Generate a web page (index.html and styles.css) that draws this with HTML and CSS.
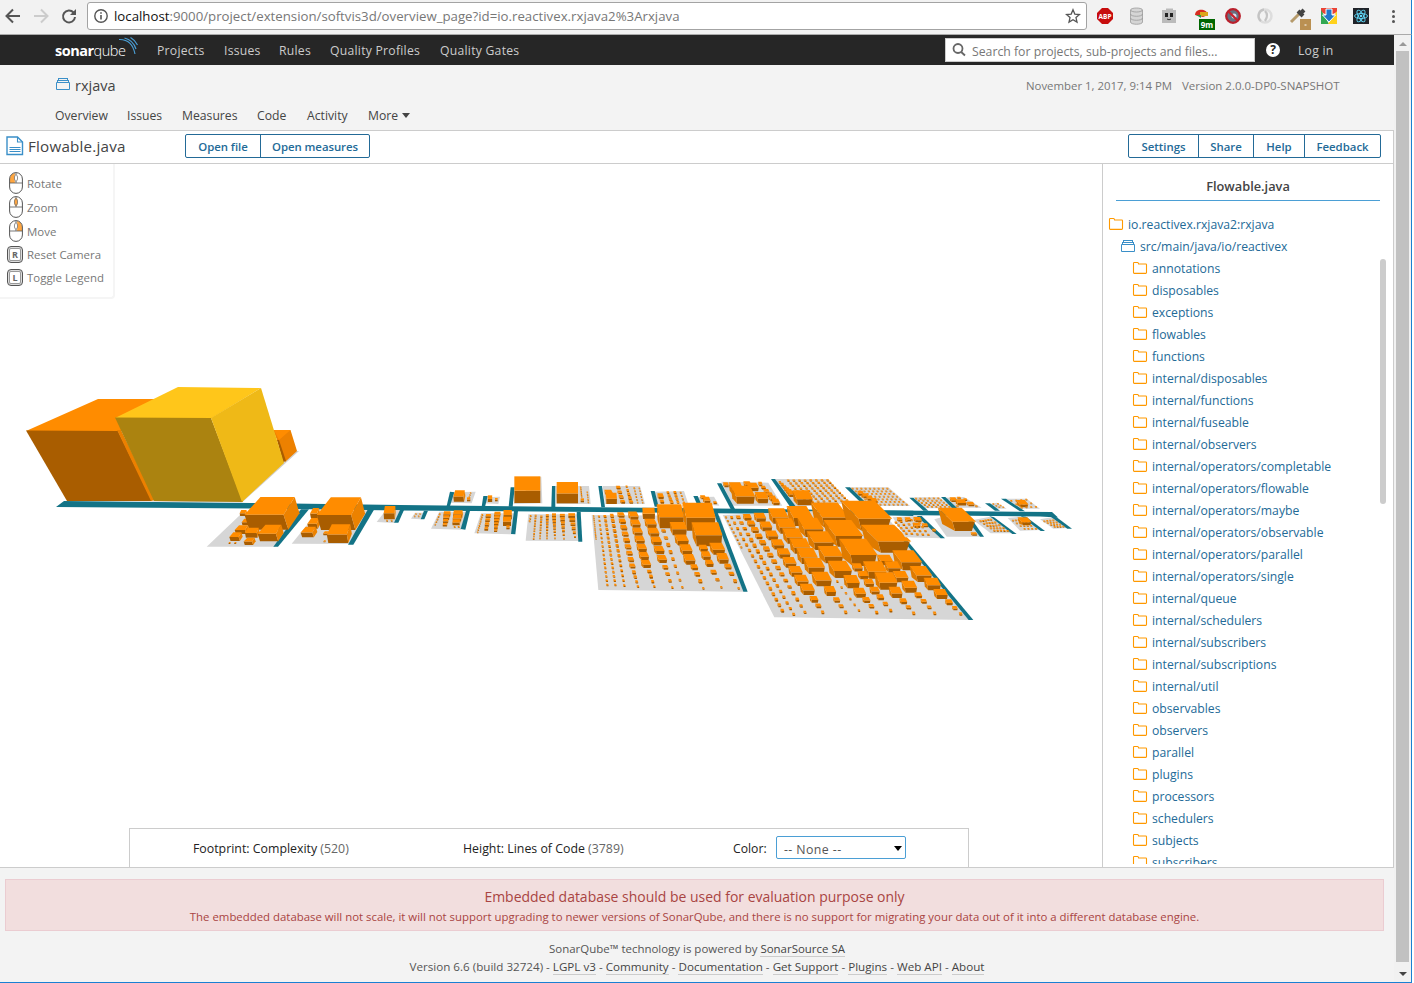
FILE: index.html
```html
<!DOCTYPE html>
<html lang="en">
<head>
<meta charset="utf-8">
<title>rxjava - SoftVis3D</title>
<link rel="stylesheet" href="styles.css">
</head>
<body>
<svg class="defs" width="0" height="0">
  <symbol id="folder" viewBox="0 0 16 14"><path d="M1.500 11.500V2.200q0-.7.7-.7h3.300q.6 0 .8.6l.3.9h7.200q.7 0 .7.7v7.800q0 .9-.8.900H2.200q-.7 0-.7-.9z" fill="none" stroke="#f90" stroke-width="1.100"/></symbol>
  <symbol id="stack" viewBox="0 0 16 14"><path d="M1.500 5.500h13v7h-13zM2.500 3.500h11M3.500 1.500h9M2.500 3v2M13.500 3v2M3.500 1v2M12.500 1v2" fill="none" stroke="currentColor"/></symbol>
  <symbol id="mouse" viewBox="0 0 14 22"><rect x=".6" y=".6" width="12.800" height="20.800" rx="6.400" fill="none" stroke="#555"/><path d="M.6 11h12.800M7 1v2M7 9v2" stroke="#555" stroke-width=".8"/><ellipse cx="7" cy="6" rx="1.600" ry="3.200" fill="none" stroke="#777" stroke-width=".8"/></symbol>
</svg>
<header class="browser">
  <svg class="nav-icons" width="88" height="34" viewBox="0 0 88 34" fill="none" stroke="#555" stroke-width="2">
    <path d="M20 16H7M13 9.500L6.500 16l6.500 6.500"/><path d="M34 16h13M41 9.500l6.500 6.500-6.500 6.500" stroke="#ccc"/>
    <path d="M73.500 12.500A6 6 0 1 0 75 17"/><path d="M76 9v6h-6z" fill="#555" stroke="none"/>
  </svg>
  <div class="address">
    <svg width="16" height="16" viewBox="0 0 16 16"><circle cx="8" cy="8" r="6.200" fill="none" stroke="#555" stroke-width="1.400"/><path d="M8 7v4.500M8 4.200v1.600" stroke="#555" stroke-width="1.600"/></svg>
    <span class="url"><b>localhost</b>:9000/project/extension/softvis3d/overview_page?id=io.reactivex.rxjava2%3Arxjava</span>
    <svg class="star" width="16" height="16" viewBox="0 0 16 16"><path d="M8 1.800l1.800 4.300 4.700.4-3.500 3.100 1 4.500L8 11.700l-4 2.400 1-4.500L1.500 6.500l4.700-.4z" fill="none" stroke="#555" stroke-width="1.300"/></svg>
  </div>
  <svg class="extensions" width="323" height="34" viewBox="1088 0 323 34">
    <path d="M1102 8h6l5 5v6l-5 5h-6l-5-5v-6z" fill="#c70d0d"/><text x="1105" y="19" class="abp" text-anchor="middle">ABP</text>
    <g fill="#d5d5d5" stroke="#999" stroke-width=".8"><path d="M1130.500 10v12c0 3 12 3 12 0V10"/><ellipse cx="1136.500" cy="10" rx="6" ry="2"/><path d="M1130.500 14c0 3 12 3 12 0M1130.500 18c0 3 12 3 12 0" fill="none"/></g>
    <path d="M1162 10h4V8.500h7V10h3v13h-14z" fill="#bbb"/><path d="M1166.500 13v4M1171.500 13v4" stroke="#222" stroke-width="3"/><path d="M1167 19q2 1.500 4 0" stroke="#333" fill="none"/>
    <path d="M1195 15c0-7 12-7 13 0l-5 2z" fill="#d82d20"/><path d="M1200 12h8v4h-8z" fill="#dba61b"/><path d="M1196 15h5v3z" fill="#279b49"/><rect x="1199" y="19" width="16" height="11" fill="#060"/><text x="1207" y="28" class="badge" text-anchor="middle">9m</text>
    <circle cx="1233" cy="16" r="6.800" fill="#667080" stroke="#b9202c" stroke-width="2.300"/><circle cx="1234" cy="16" r="2.500" fill="#dde"/><path d="M1228.500 11.500l9 9" stroke="#c9202c" stroke-width="2.300"/>
    <g fill="none"><circle cx="1265" cy="16" r="6.500" stroke="#ddd" stroke-width="2.500"/><path d="M1264 9.500a6.500 6.500 0 0 0-3 11.500M1265 11q4 4 0 10" stroke="#c4c4c4" stroke-width="2.300"/></g>
    <path d="M1291 22l8-8" stroke="#b69b6c" stroke-width="3"/><path d="M1298 11l5 5M1301 13l3-3" stroke="#444" stroke-width="4"/><rect x="1300" y="19" width="11" height="11" fill="#ba9052"/><path d="M1304.500 25h2" stroke="#fff"/>
    <path d="M1321 8h16v4l-8 4-8-4z" fill="#ea4335"/><path d="M1321 10l8 14h-8z" fill="#31a853"/><path d="M1337 11v13h-9z" fill="#ffd21c"/><path d="M1326 9h6v6h3.500l-6.500 7-6.500-7h3.500z" fill="#2377c8" stroke="#fff"/>
    <rect x="1353" y="8" width="16" height="16" fill="#202329"/><g fill="none" stroke="#61dafb" stroke-width=".9"><ellipse cx="1361" cy="16" rx="6.500" ry="2.500"/><ellipse cx="1361" cy="16" rx="6.500" ry="2.500" transform="rotate(60 1361 16)"/><ellipse cx="1361" cy="16" rx="6.500" ry="2.500" transform="rotate(120 1361 16)"/></g><circle cx="1361" cy="16" r="1.300" fill="#61dafb"/>
    <g fill="#555"><circle cx="1393.500" cy="11.500" r="1.500"/><circle cx="1393.500" cy="16.500" r="1.500"/><circle cx="1393.500" cy="21.500" r="1.500"/></g>
  </svg>
</header>
<div class="window">
<main class="page">
  <nav class="global-nav">
    <div class="logo"><b>sonar</b><span>qube</span><svg width="20" height="20" viewBox="0 0 20 20" fill="none" stroke="#4b9fd5" stroke-width="1.200"><path d="M1 3.500Q14 3 17 18M6.500 2Q15 4 18 13M12.500 1.500Q17 4 19.500 9"/></svg></div>
    <a>Projects</a><a>Issues</a><a>Rules</a><a>Quality Profiles</a><a>Quality Gates</a>
    <div class="search"><svg width="16" height="16" viewBox="0 0 16 16" fill="none" stroke="#666" stroke-width="1.800"><circle cx="6" cy="6.500" r="4.500"/><path d="M9.200 10l3.800 3.500"/></svg><span>Search for projects, sub-projects and files...</span></div>
    <i class="help">?</i>
    <a>Log in</a>
  </nav>
  <section class="project">
    <div class="project-top"><svg class="blue" width="16" height="14"><use href="#stack"/></svg><span class="project-name">rxjava</span><span class="date">November 1, 2017, 9:14 PM</span><span class="version">Version 2.0.0-DP0-SNAPSHOT</span></div>
    <div class="tabs"><a>Overview</a><a>Issues</a><a>Measures</a><a>Code</a><a>Activity</a><a class="more">More</a></div>
  </section>
  <section class="app">
    <div class="titlebar">
      <svg width="18" height="20" viewBox="0 0 18 20" fill="none" stroke="#3a8fc8" stroke-width="1.400"><path d="M1 1h10.500l5 5v12.500H1z"/><path d="M11.500 1v5h5M3.500 11.500h11M3.500 13.500h11M3.500 15.500h11" stroke-width="1.100"/></svg>
      <span class="file-title">Flowable.java</span>
      <div class="buttons open"><span>Open file</span><span>Open measures</span></div>
      <div class="buttons actions"><span>Settings</span><span>Share</span><span>Help</span><span>Feedback</span></div>
    </div>
    <div class="workspace">
      <div class="viewer">
        <svg id="scene" class="scene" width="1102" height="703" viewBox="0 164 1102 703"></svg>
        <div class="controls">
          <p><svg width="14" height="22"><path d="M1 11V7q0-5 5-6l-.5 5 .5 5z" fill="#ffa640"/><use href="#mouse"/></svg>Rotate</p>
          <p><svg width="14" height="22"><ellipse cx="7" cy="6" rx="1.800" ry="4" fill="#ffa640"/><use href="#mouse"/></svg>Zoom</p>
          <p><svg width="14" height="22"><path d="M13 11V7q0-5-5-6l.5 5-.5 5z" fill="#ffa640"/><use href="#mouse"/></svg>Move</p>
          <p class="key-row"><kbd>R</kbd>Reset Camera</p>
          <p class="key-row"><kbd>L</kbd>Toggle Legend</p>
        </div>
        <div class="metrics">
          <span class="footprint">Footprint: Complexity <em>(520)</em></span>
          <span class="height">Height: Lines of Code <em>(3789)</em></span>
          <span class="color">Color:</span>
          <div class="select">-- None --</div>
        </div>
      </div>
      <aside class="sidebar">
        <h3>Flowable.java</h3>
        <div class="root"><svg width="16" height="14"><use href="#folder"/></svg>io.reactivex.rxjava2:rxjava</div>
        <div class="root sub"><svg width="16" height="14"><use href="#stack"/></svg>src/main/java/io/reactivex</div>
        <ul id="tree" class="tree"></ul>
      </aside>
    </div>
  </section>
  <footer class="footer">
    <div class="alert"><strong>Embedded database should be used for evaluation purpose only</strong><span>The embedded database will not scale, it will not support upgrading to newer versions of SonarQube, and there is no support for migrating your data out of it into a different database engine.</span></div>
    <p class="powered">SonarQube™ technology is powered by <a>SonarSource SA</a></p>
    <p class="links">Version 6.6 (build 32724) - <a>LGPL v3</a> - <a>Community</a> - <a>Documentation</a> - <a>Get Support</a> - <a>Plugins</a> - <a>Web API</a> - <a>About</a></p>
  </footer>
</main>
<div class="scrollbar"><i class="arrow-up"></i><div class="thumb"></div><i class="arrow-down"></i></div>
</div>
<script src="scene.js"></script>
</body>
</html>
```
FILE: styles.css
```css
* { box-sizing: border-box; }
body { margin: 0; width: 1414px; height: 983px; overflow: hidden; background: #fff; font-family: "Open Sans", "Noto Sans", sans-serif; font-size: 12.2px; color: #444; }
p, h3, ul { margin: 0; padding: 0; }
.defs { position: absolute; }
svg { display: block; flex: none; }
.browser { display: flex; width: 1412px; height: 35px; background: #f2f2f2; border-bottom: 1px solid #aaa; border-right: 1px solid #1a80d2; }
.nav-icons { margin-right: -1px; }
.address { width: 1000px; height: 28px; margin-top: 2px; border: 1px solid #a3a3a3; border-radius: 3px; background: #fff; display: flex; align-items: center; padding: 0 5px; flex: none; }
.url { margin-left: 5px; font-size: 13.240px; color: #777; white-space: nowrap; }
.url b { font-weight: 400; color: #111; }
.star { margin-left: auto; }
.extensions { margin-left: 1px; }
.abp { font: bold 6.500px "Open Sans"; fill: #fff; }
.badge { font: bold 8px "Open Sans"; fill: #fff; }
.window { display: flex; width: 1412px; height: 948px; border-right: 1px solid #1a80d2; border-bottom: 1px solid #1a80d2; }
.page { width: 1394px; background: #f3f3f3; flex: none; }
.global-nav { display: grid; grid-template-columns: 102px 67px 55px 51px 110px 505px 310px 43px 80px; height: 30px; padding-left: 55px; align-items: center; background: #262626; color: #ccc; letter-spacing: .25px; white-space: nowrap; }
.logo { display: flex; align-items: center; height: 30px; color: #fff; font-size: 14.500px; letter-spacing: -.5px; }
.logo span { font-weight: 300; }
.logo svg { margin: -8px 0 0 -7px; }
.search { display: flex; align-items: center; height: 24px; background: #fff; border: 1px solid #ccc; color: #777; padding-left: 6px; letter-spacing: 0; font-size: 12.250px; }
.search span { margin-left: 4px; padding-top: 2px; }
.help { margin-left: 11px; width: 14px; height: 14px; border-radius: 50%; background: #fff; color: #262626; font: bold 12px/14px "Open Sans", sans-serif; text-align: center; letter-spacing: 0; }
.project { height: 65px; padding-left: 55px; }
.project-top { display: flex; align-items: center; height: 41px; color: #777; }
.blue { color: #3a8fc8; margin-top: -3px; }
.project-name { font-size: 14.500px; color: #444; width: 951px; margin-left: 4px; }
.date { width: 156px; font-size: 11.400px; white-space: nowrap; }
.version { font-size: 11.500px; white-space: nowrap; }
.tabs { display: grid; grid-template-columns: 72px 55px 75px 50px 61px 60px; height: 19px; align-items: center; white-space: nowrap; }
.more::after { content: ""; display: inline-block; border: 4px solid transparent; border-top: 5px solid #444; border-bottom: 0; margin: 0 0 2px 4px; }
.app { height: 738px; border: 1px solid #ccc; border-left: 0; background: #fff; }
.titlebar { height: 33px; display: flex; align-items: center; padding: 0 12px 2px 6px; border-bottom: 1px solid #ccc; }
.file-title { width: 157px; margin-left: 4px; font-size: 15.200px; font-weight: 500; letter-spacing: .2px; }
.buttons { display: flex; height: 24px; border: 1px solid #236a97; border-radius: 2px; color: #236a97; font-size: 11.400px; font-weight: 600; }
.buttons span { display: flex; justify-content: center; align-items: center; white-space: nowrap; }
.buttons span + span { border-left: 1px solid #236a97; }
.open { width: 185px; letter-spacing: -.05px; }
.open span:first-child { width: 74px; }
.open span:last-child { flex: 1; }
.actions { display: grid; grid-template-columns: 69px 55px 51px 76px; margin-left: auto; }
.workspace { display: flex; height: 703px; }
.viewer { width: 1102px; position: relative; flex: none; }
.controls { position: absolute; left: 0; top: 0; width: 115px; height: 135px; padding: 7px 0 0 8px; border: solid #f5f5f5; border-width: 0 2px 2px 0; border-radius: 0 0 4px 0; color: #777; }
.controls p { display: flex; align-items: center; height: 24px; gap: 4px; margin-left: 1px; font-size: 11.450px; white-space: nowrap; }
.controls p.key-row { height: 23px; gap: 4px; margin-left: -1px; }
kbd { width: 16px; height: 17px; border: 1px solid #555; border-radius: 4px; box-shadow: inset 0 0 0 1px #ddd, inset 0 0 0 2px #999; font: bold 9px/15px "Open Sans", sans-serif; text-align: center; color: #666; }
.metrics { position: absolute; left: 129px; bottom: 0; width: 840px; height: 39px; border: 1px solid #ccc; border-bottom: 0; display: flex; align-items: center; padding-left: 63px; color: #222; background: #fff; white-space: nowrap; font-size: 12.350px; }
.metrics em { font-style: normal; color: #666; }
.footprint { width: 270px; }
.height { width: 270px; }
.color { width: 43px; font-size: 12.200px; padding-top: 1px; }
.select { position: relative; width: 130px; height: 23px; margin-top: -2px; border: 1px solid #4b9fd5; border-radius: 2px; line-height: 25px; padding-left: 7px; color: #555; letter-spacing: .4px; }
.select::after { content: ""; position: absolute; right: 3px; top: 9px; border: 4px solid transparent; border-top: 5px solid #000; border-bottom: 0; }
.sidebar { position: relative; width: 291px; flex: none; border-left: 1px solid #ccc; padding: 0 13px 0 5px; color: #236a97; overflow: hidden; }
.sidebar h3 { margin: 0 0 12px 8px; height: 37px; padding-top: 8px; border-bottom: 1px solid #4b9fd5; text-align: center; font-size: 12.800px; line-height: 28px; font-weight: 600; color: #444; }
.root, .tree li { display: flex; align-items: center; height: 22px; gap: 4px; white-space: nowrap; }
.root.sub { padding-left: 12px; }
.root.sub svg { color: #3a8fc8; }
.tree { height: 607px; padding-left: 24px; overflow: hidden; list-style: none; }
.sidebar::after { content: ""; position: absolute; right: 7px; top: 95px; width: 6px; height: 245px; background: #ccc; border-radius: 3px; }
.footer { height: 114px; text-align: center; font-size: 11.640px; color: #555; white-space: nowrap; }
.alert { margin: 11px 10px 0 5px; height: 52px; border: 1px solid #ebccd1; background: #f2dede; color: #a94442; padding-top: 7px; }
.alert strong { display: block; font-size: 13.980px; line-height: 20px; font-weight: 400; }
.alert span { display: block; line-height: 20px; font-size: 11.400px; }
.powered { line-height: 18px; margin-top: 9px; font-size: 11.460px; }
.links { line-height: 18px; }
.footer a { color: #444; border-bottom: 1px solid #ccc; }
.scrollbar { width: 17px; background: #f1f1f1; display: flex; flex-direction: column; align-items: center; padding: 7px 0 6px; }
.thumb { flex: 1; width: 13px; margin: 5px 0 10px; background: #c1c1c1; }
.arrow-up { border: 4px solid transparent; border-bottom-color: #999; border-top: 0; }
.arrow-down { border: 4px solid transparent; border-top-color: #444; border-bottom: 0; }
```
FILE: scene.js
```js
var folders = ['annotations','disposables','exceptions','flowables','functions','internal/disposables','internal/functions','internal/fuseable','internal/observers','internal/operators/completable','internal/operators/flowable','internal/operators/maybe','internal/operators/observable','internal/operators/parallel','internal/operators/single','internal/queue','internal/schedulers','internal/subscribers','internal/subscriptions','internal/util','observables','observers','parallel','plugins','processors','schedulers','subjects','subscribers'];
document.getElementById('tree').innerHTML = folders.map(function (f) {
  return '<li><svg width="16" height="14"><use href="#folder"/></svg>' + f + '</li>';
}).join('');

var TEAL = '#137386', GROUND = '#d6d6d6', TOP = '#ff8c00', SIDE = '#df7b00', FRONT = '#a95d00';
var out = [];
function poly(points, color) { return '<polygon points="' + points + '" fill="' + color + '"/>'; }

/* Each district works in local units, three to a pixel, from its own origin. */
function district(ox, oy, build) {
  var ground = [], roads = [], boxes = [];
  var d = {
    plot: function (p) { ground.push(poly(p, GROUND)); },
    road: function (p) { roads.push(poly(p, TEAL)); },
    /* Box with centre x, y, overall width and height, and the shift of its top's back edge. */
    box: function (x, y, w, h, k) {
      if (h === undefined) h = w < 14 ? w : w * .74;
      if (k === undefined) k = -.22;
      var s = Math.abs(k) * w, fw = w - s, l = x - w / 2, t = y - h / 2, m = t + h * (k < -.2 ? .6 : .54), b = t + h, c = s * .3;
      var html;
      if (k < 0) {
        html = poly([l + s, m, l + w - c * .3, m, l + w - c, b, l + s + c * .6, b], FRONT) + poly([l, t, l + s, m, l + s + c * .6, b, l + s * .3, m + h * .1], SIDE) +
               poly([l, t, l + fw, t, l + w, m, l + s, m], TOP);
      } else {
        html = poly([l, m, l + fw, m, l + fw + c, b, l + c, b], FRONT) + poly([l + fw, m, l + w - c, t, l + w, t + h * .5, l + fw + c, b], '#ec8200') +
               poly([l, m, l + s, t, l + w - c, t, l + fw, m], TOP);
      }
      boxes.push({ y: b, html: html });
    },
    row: function (x0, y0, x1, y1, n, a, z, k) {
      for (var i = 0; i < n; i++) { var t = n > 1 ? i / (n - 1) : 0; d.box(x0 + (x1 - x0) * t, y0 + (y1 - y0) * t, a + (z - a) * t, undefined, k); }
    },
    /* Rows of small boxes spread over the quad top-left, top-right, bottom-right, bottom-left. */
    grid: function (q, cols, rows, size) {
      for (var r = 0; r < rows; r++) for (var c = 0; c < cols; c++) {
        var u = cols > 1 ? c / (cols - 1) : 0, v = rows > 1 ? r / (rows - 1) : 0;
        d.box((q[0] * (1 - u) + q[2] * u) * (1 - v) + (q[6] * (1 - u) + q[4] * u) * v,
              (q[1] * (1 - u) + q[3] * u) * (1 - v) + (q[7] * (1 - u) + q[5] * u) * v, size, size * .75);
      }
    }
  };
  build(d);
  boxes.sort(function (a, b) { return a.y - b.y; });
  out.push('<g transform="translate(' + ox + ' ' + oy + ') scale(.33333)">' + ground.join('') + roads.join('') + boxes.map(function (b) { return b.html; }).join('') + '</g>');
}

out.push(poly('56,507 64,501 250,503 400,505 620,507.500 800,509.500 1052,512 1058,517.500 1040,516.500 800,514 600,512 400,510.500 250,508.500', TEAL));
out.push(poly('66,500.500 242,502.500 299,451 290,451 240,500', '#d0d0d0'));
out.push(poly('98,399 165,399 130,431 26,431', TOP) + poly('26,430.500 118,431 152,501 67,501', FRONT) + poly('117,430 121,430 155,500 151,501', '#ec8000'));
out.push(poly('273,430 290.500,430 297,451 285,462 277,440', '#ed8100') + poly('274,430 290.500,430 279,440', TOP) + poly('277,440 279,440 286,461 283,462', FRONT));
out.push(poly('178,387 261,388 211,418.500 115,418', '#ffc61a') + poly('115,417.500 211,418 243,502 154,501', '#ab8310') + poly('211,418 261,388 284,463 242,502', '#efb917'));

district(0, 370, function (d) {
  d.plot('620,530 720,435 905,418 825,530'); d.road('903,418 927,418 834,530 820,530');
  d.plot('875,521 950,430 1105,420 1050,522'); d.road('1103,419 1122,419 1060,524 1044,524');
  d.box(730, 429, 22, 18, .2); d.box(816, 430, 165, 98, .29);
  d.box(738, 456, 26, 20, .3); d.box(726, 479, 44, 26, .3); d.box(708, 500, 40, 26, .3);
  d.box(757, 488, 44, 30, .2); d.box(812, 489, 78, 50, .3); d.box(749, 514, 36, 22, .3);
  d.box(689, 519, 7, 6, .3); d.box(706, 519, 7, 6, .3);
  d.box(945, 429, 30, 30, .3); d.box(1023, 431, 145, 98, .29); d.box(942, 460, 40, 32, .3);
  d.box(927, 486, 50, 32, .3); d.box(978, 490, 18, 12, .3); d.box(1018, 491, 75, 56, .2); d.box(974, 514, 8, 6, .3);
});

district(380, 460, function (d) {
  d.plot('-10,186 18,150 62,150 42,189'); d.road('60,150 72,150 55,188 42,188'); d.box(29, 158, 36, 40, .1); d.row(21, 182, 35, 182, 2, 6, 6);
  d.plot('93,176 105,158 130,158 122,178'); d.road('132,152 144,152 133,178 122,178'); d.row(104, 169, 116, 169, 2, 5, 5); d.row(108, 162, 120, 162, 2, 5, 5);
  d.plot('153,206 178,155 258,155 243,209'); d.road('258,152 270,152 256,209 242,207');
  d.row(179, 163, 166, 194, 5, 6, 5, .2); d.row(201, 162, 195, 194, 4, 22, 14, .1); d.row(234, 162, 229, 187, 3, 30, 24, .1); d.row(224, 201, 236, 201, 2, 6, 6);
  d.plot('283,220 303,160 405,160 395,223'); d.road('402,153 414,153 406,223 393,222');
  d.row(307, 165, 293, 217, 9, 6, 5); d.row(325, 168, 319, 206, 4, 17, 12, .1); d.row(352, 163, 347, 211, 6, 20, 10, .1); d.box(383, 164, 25, 28, 0); d.box(381, 184, 24, 28, 0); d.box(384, 202, 10, 12, 0);
  d.plot('437,242 445,163 592,163 597,243'); d.road('590,155 602,155 607,245 595,245');
  d.row(452, 168, 449, 184, 3, 6, 6); d.row(467, 167, 461, 237, 10, 6, 5, 0); d.row(484, 170, 480, 235, 9, 7, 5, 0); d.row(502, 167, 501, 235, 9, 9, 5, 0); d.row(522, 166, 525, 235, 8, 12, 5, 0); d.row(547, 167, 552, 236, 7, 15, 5, 0); d.row(575, 167, 585, 231, 6, 20, 6, 0);
  d.plot('213,97 287,95 275,130 208,128'); d.road('210,95 223,97 210,138 200,138'); d.box(238, 108, 36, 34, .15); d.box(266, 118, 10, 12, 0); d.row(272, 99, 268, 111, 3, 5, 5);
  d.plot('313,112 360,110 355,132 312,130'); d.road('310,108 323,108 315,140 305,140'); d.box(330, 116, 13, 20, 0); d.box(349, 119, 8, 10, 0);
  d.plot('475,50 484,50 487,130 400,132'); d.road('392,82 404,82 398,140 386,140'); d.box(442, 89, 78, 80, 0);
  d.plot('526,78 627,78 632,132 530,132'); d.road('516,78 526,78 526,142 514,142'); d.box(562, 98, 64, 64, 0); d.row(602, 82, 605, 110, 6, 5, 5); d.box(607, 121, 10, 12, 0); d.row(622, 97, 625, 127, 5, 5, 5);
});

district(580, 460, function (d) {
  d.plot('68,78 180,78 195,132 75,132'); d.road('55,78 66,78 75,142 64,142');
  d.box(86, 98, 26, 18); d.box(94, 115, 34, 34, -.05); d.row(115, 83, 128, 125, 4, 15, 16); d.row(140, 80, 153, 126, 5, 7, 14); d.row(163, 85, 173, 128, 6, 6, 5); d.row(178, 85, 188, 128, 6, 5, 5);
  d.plot('224,95 312,93 325,132 232,132'); d.road('212,93 224,93 236,140 224,140');
  d.box(242, 109, 20, 18); d.box(246, 125, 14, 12); d.row(264, 98, 275, 127, 4, 9, 12); d.row(285, 98, 294, 127, 4, 10, 9); d.row(302, 98, 312, 128, 4, 6, 7);
  d.plot('353,112 402,110 418,137 362,132'); d.road('340,108 353,108 365,135 352,135'); d.box(369, 112, 18, 12); d.box(380, 120, 24, 19); d.box(405, 128, 12, 9);
  d.plot('424,65 565,68 607,137 458,137'); d.road('411,70 424,70 465,147 452,147');
  d.box(438, 74, 18, 15); d.box(468, 85, 44, 36); d.box(489, 104, 74, 54); d.box(502, 72, 24, 17); d.box(518, 81, 38, 25); d.box(545, 113, 42, 34); d.row(541, 72, 587, 126, 6, 13, 26);
  d.plot('579,57 745,57 807,130 640,140'); d.road('573,57 585,57 648,140 630,140');
  d.grid([625, 62, 743, 61, 801, 121, 680, 126], 8, 9, 9); d.row(600, 67, 634, 102, 6, 8, 24); d.box(668, 113, 62, 45);
  d.plot('810,82 925,82 990,138 865,138'); d.road('795,82 810,82 855,125 840,125');
  d.grid([818, 86, 922, 86, 980, 134, 875, 134], 9, 7, 7); d.row(842, 100, 882, 122, 4, 20, 22);
  d.road('715,150 1000,152 1000,168 715,162');

  d.plot('35,165 420,168 490,395 55,390'); d.road('400,155 412,155 503,395 490,395');
  d.row(41, 168, 48, 237, 12, 5, 5); d.row(57, 170, 82, 375, 17, 7, 8); d.row(75, 170, 106, 375, 17, 10, 8); d.row(96, 168, 133, 377, 15, 13, 8);
  d.row(123, 165, 157, 318, 9, 23, 20); d.row(162, 337, 174, 380, 4, 13, 8);
  d.row(160, 167, 198, 312, 7, 33, 32); d.row(208, 335, 223, 380, 4, 15, 8);
  d.box(206, 160, 38, 34, -.05); d.row(212, 190, 246, 297, 5, 38, 32); d.row(256, 322, 277, 383, 4, 19, 8); d.row(251, 213, 307, 382, 9, 15, 8);
  d.box(271, 169, 82, 72, -.1); d.box(357, 170, 100, 84, -.12); d.box(295, 206, 52, 40, -.15); d.box(305, 240, 44, 33); d.box(318, 269, 40, 32); d.box(328, 298, 38, 32); d.row(343, 322, 370, 385, 4, 24, 8);
  d.box(381, 223, 93, 72, -.14); d.box(370, 265, 29, 22); d.box(378, 287, 31, 26); d.box(388, 310, 27, 22); d.row(401, 337, 424, 382, 3, 20, 8);
  d.box(412, 266, 48, 36); d.box(428, 295, 38, 32); d.row(444, 320, 476, 385, 4, 23, 8);

  d.plot('428,165 900,145 1172,480 583,472'); d.road('960,230 972,230 1180,480 1166,480');
  d.row(438, 172, 484, 262, 9, 7, 7); d.row(455, 173, 607, 452, 18, 10, 12); d.row(475, 172, 641, 463, 18, 15, 10); d.row(502, 172, 675, 457, 16, 27, 10);
  d.row(540, 172, 682, 388, 9, 38, 46); d.row(702, 418, 728, 457, 3, 27, 11);
  d.row(595, 168, 703, 318, 6, 62, 65); d.box(725, 357, 62, 44); d.box(750, 393, 38, 30); d.row(770, 420, 797, 457, 3, 22, 11);
  d.box(660, 168, 80, 60, -.26); d.box(692, 202, 80, 58, -.26); d.box(722, 242, 84, 56, -.26); d.box(752, 284, 78, 52, -.26); d.box(780, 328, 74, 52, -.26); d.box(815, 365, 50, 40); d.box(839, 398, 40, 30); d.row(859, 420, 890, 458, 3, 25, 11);
  d.box(750, 165, 115, 75, -.3); d.box(790, 220, 120, 80, -.3); d.box(835, 277, 116, 82, -.3); d.box(885, 330, 72, 52); d.box(918, 363, 70, 52); d.box(947, 397, 42, 34); d.row(970, 424, 1001, 460, 3, 24, 11);
  d.box(860, 167, 154, 90, -.34); d.box(918, 236, 152, 84, -.34); d.box(915, 300, 48, 32); d.box(938, 321, 50, 34); d.box(962, 350, 48, 34); d.box(988, 380, 48, 36); d.row(1015, 406, 1064, 460, 4, 24, 11);
  d.box(982, 301, 90, 60, -.3); d.box(1023, 342, 68, 48, -.3); d.box(1057, 372, 52, 38); d.box(1082, 402, 44, 30); d.row(1107, 427, 1142, 462, 3, 24, 11);
  d.row(772, 365, 837, 452, 6, 8, 8); d.row(832, 322, 884, 392, 4, 34, 32); d.row(901, 412, 932, 452, 3, 24, 11);
});

district(780, 460, function (d) {
  d.plot('400,112 478,112 520,145 435,145'); d.road('388,113 400,113 445,152 430,152'); d.grid([408, 116, 475, 115, 508, 141, 443, 141], 6, 5, 7);
  d.plot('496,113 552,111 605,143 530,143'); d.road('483,111 496,111 540,152 524,152'); d.box(520, 119, 22, 14); d.box(543, 127, 35, 19); d.box(572, 132, 24, 14); d.box(537, 114, 13, 8); d.box(556, 119, 12, 8); d.box(589, 139, 9, 6); d.box(532, 139, 9, 6);
  d.plot('630,132 650,128 680,146 652,146'); d.road('615,130 630,130 660,152 645,152'); d.grid([640, 132, 654, 131, 670, 142, 658, 142], 2, 3, 6);
  d.plot('678,116 740,116 780,146 722,146'); d.road('663,116 678,116 735,154 720,154'); d.grid([694, 123, 739, 119, 768, 141, 725, 143], 4, 3, 7); d.box(727, 131, 37, 22, -.3);
  d.plot('338,172 410,168 485,235 375,232'); d.road('410,168 425,168 495,235 482,235'); d.grid([348, 188, 410, 178, 445, 225, 379, 221], 5, 5, 9); d.box(359, 178, 17, 13); d.box(384, 178, 20, 13); d.box(413, 179, 26, 16); d.box(410, 196, 24, 16); d.box(435, 196, 20, 12); d.box(462, 211, 13, 9);
  d.plot('463,178 490,170 560,175 600,230 500,230'); d.road('555,170 570,170 612,230 600,230'); d.box(582, 222, 20, 10);
  d.box(531, 178, 115, 70, -.38);
  d.plot('580,180 630,170 697,220 632,220'); d.road('628,168 642,172 710,222 697,222'); d.grid([602, 184, 633, 179, 683, 213, 643, 212], 5, 5, 8);
  d.plot('683,174 722,170 782,210 720,212'); d.road('722,168 738,170 795,213 782,213'); d.grid([699, 182, 725, 180, 768, 207, 734, 207], 4, 4, 7); d.box(734, 184, 42, 24, -.3);
  d.plot('780,178 815,172 862,204 820,206'); d.road('812,170 828,170 876,206 862,206'); d.grid([793, 184, 820, 181, 850, 200, 824, 201], 4, 4, 7);
});
document.getElementById('scene').innerHTML = out.join('');
```
